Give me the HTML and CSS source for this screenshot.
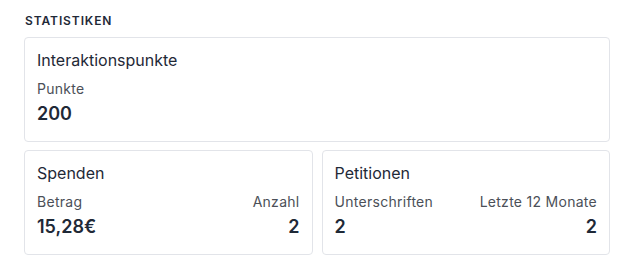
FILE: index.html
```html
<!DOCTYPE html>
<html lang="de">
<head>
    <meta charset="UTF-8">
    <meta name="viewport" content="width=device-width, initial-scale=1.0">
    <title>Statistiken</title>
    <link rel="stylesheet" href="styles.css">
</head>
<body>
    <div class="stats">
        <h2 class="stats-heading">Statistiken</h2>
        <div class="card">
            <div class="card-title">Interaktionspunkte</div>
            <div class="card-row">
                <div class="stat">
                    <div class="stat-label">Punkte</div>
                    <div class="stat-value">200</div>
                </div>
            </div>
        </div>
        <div class="card-grid">
            <div class="card">
                <div class="card-title">Spenden</div>
                <div class="card-row">
                    <div class="stat">
                        <div class="stat-label">Betrag</div>
                        <div class="stat-value">15,28€</div>
                    </div>
                    <div class="stat stat-right">
                        <div class="stat-label">Anzahl</div>
                        <div class="stat-value">2</div>
                    </div>
                </div>
            </div>
            <div class="card">
                <div class="card-title">Petitionen</div>
                <div class="card-row">
                    <div class="stat">
                        <div class="stat-label">Unterschriften</div>
                        <div class="stat-value">2</div>
                    </div>
                    <div class="stat stat-right">
                        <div class="stat-label">Letzte 12 Monate</div>
                        <div class="stat-value">2</div>
                    </div>
                </div>
            </div>
        </div>
    </div>
</body>
</html>
```

FILE: styles.css
```css
body {
    font-family: Inter, "Noto Sans", sans-serif;
    margin: 0;
    padding: 13px 24px 0 24px;
    background-color: #ffffff;
    color: #1f2937;
}
.stats {
    width: 586px;
}
.stats-heading {
    margin: 0 0 8px 1px;
    font-size: 12px;
    line-height: 16px;
    font-weight: 600;
    letter-spacing: 0.075em;
    text-transform: uppercase;
    color: #1f2937;
}
.card {
    border: 1px solid #e2e4e9;
    border-radius: 4px;
    padding: 12px 12px 13px 12px;
    background: white;
}
.card-grid {
    display: grid;
    grid-template-columns: 1fr 1fr;
    gap: 9px;
    margin-top: 8px;
}
.card-title {
    font-size: 16px;
    line-height: 20px;
    font-weight: 400;
    margin-bottom: 9px;
    color: #1f2937;
}
.card-row {
    display: flex;
    justify-content: space-between;
}
.stat-right {
    text-align: right;
}
.stat-label {
    font-size: 14px;
    line-height: 20px;
    letter-spacing: 0.02em;
    color: #4b5058;
    margin-bottom: 1px;
}
.stat-value {
    font-size: 18px;
    line-height: 28px;
    font-weight: 600;
    color: #1f2937;
}
```
